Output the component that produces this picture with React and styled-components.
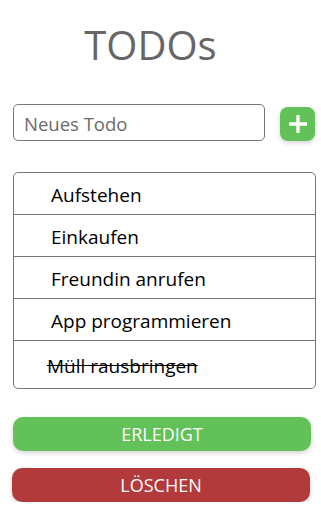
import React from "react";
import styled, { createGlobalStyle } from "styled-components";

const GlobalStyle = createGlobalStyle`
  body {
    margin: 0;
    background: #fff;
    font-family: "Open Sans", "Noto Sans", sans-serif;
  }
`;

const Page = styled.main`
  width: 321px;
  padding: 0 5px 0 13px;
  box-sizing: border-box;
`;

const Title = styled.h1`
  margin: 0;
  padding: 18px 28px 0 0;
  height: 86px;
  box-sizing: border-box;
  text-align: center;
  font-weight: 400;
  font-size: 40px;
  line-height: 54px;
  color: #666;
`;

const InputRow = styled.div`
  display: flex;
  align-items: flex-start;
  gap: 15px;
  margin-top: 18px;
`;

const TodoInput = styled.input`
  width: 252px;
  height: 37px;
  box-sizing: border-box;
  border: 1px solid #777;
  border-radius: 5px;
  padding: 2px 10px 0;
  font-family: inherit;
  font-size: 18.5px;
  color: #333;
  outline: none;

  &::placeholder {
    color: #6b6b6b;
  }
`;

const AddButton = styled.button`
  width: 35px;
  height: 34px;
  margin-top: 3px;
  border: none;
  border-radius: 8px;
  background: #63c15a;
  box-shadow: 0 2px 5px rgba(0, 0, 0, 0.18);
  display: flex;
  align-items: center;
  justify-content: center;
  padding: 0;
`;

const List = styled.ul`
  list-style: none;
  margin: 31px 0 0;
  padding: 0;
  border: 1px solid #777;
  border-radius: 5px;
  overflow: hidden;
`;

const Item = styled.li`
  height: ${(p) => (p.$last ? 47 : 41)}px;
  border-bottom: ${(p) => (p.$last ? "none" : "1px solid #777")};
  display: flex;
  align-items: center;
  padding-left: ${(p) => (p.$done ? 33 : 37)}px;
  padding-top: 2px;
  box-sizing: border-box;
  font-size: 19px;
  color: #000;
  text-decoration: ${(p) => (p.$done ? "line-through" : "none")};
  ${(p) => (p.$last ? "" : "height: 42px;")}
`;

const ActionButton = styled.button`
  display: block;
  width: 298px;
  height: 34px;
  margin: ${(p) => p.$margin};
  border: none;
  border-radius: 10px;
  background: ${(p) => p.$color};
  box-shadow: 0 2px 5px rgba(0, 0, 0, 0.18);
  color: #fff;
  font-family: inherit;
  font-size: 18px;
  text-transform: uppercase;
  padding: 0;
`;

const todos = [
  { text: "Aufstehen" },
  { text: "Einkaufen" },
  { text: "Freundin anrufen" },
  { text: "App programmieren" },
  { text: "Müll rausbringen", done: true },
];

export default function App() {
  return (
    <>
      <GlobalStyle />
      <Page>
        <Title>TODOs</Title>
        <InputRow>
          <TodoInput placeholder="Neues Todo" />
          <AddButton aria-label="Hinzufügen">
            <svg width="20" height="20" viewBox="0 0 20 20">
              <path d="M10 1v18M1 10h18" stroke="#fff" strokeWidth="3.4" />
            </svg>
          </AddButton>
        </InputRow>
        <List>
          {todos.map((t, i) => (
            <Item key={t.text} $done={t.done} $last={i === todos.length - 1}>
              {t.text}
            </Item>
          ))}
        </List>
        <ActionButton $color="#63c15a" $margin="28px 0 0">
          Erledigt
        </ActionButton>
        <ActionButton $color="#b33a3a" $margin="17px 0 0 -1px">
          Löschen
        </ActionButton>
      </Page>
    </>
  );
}
